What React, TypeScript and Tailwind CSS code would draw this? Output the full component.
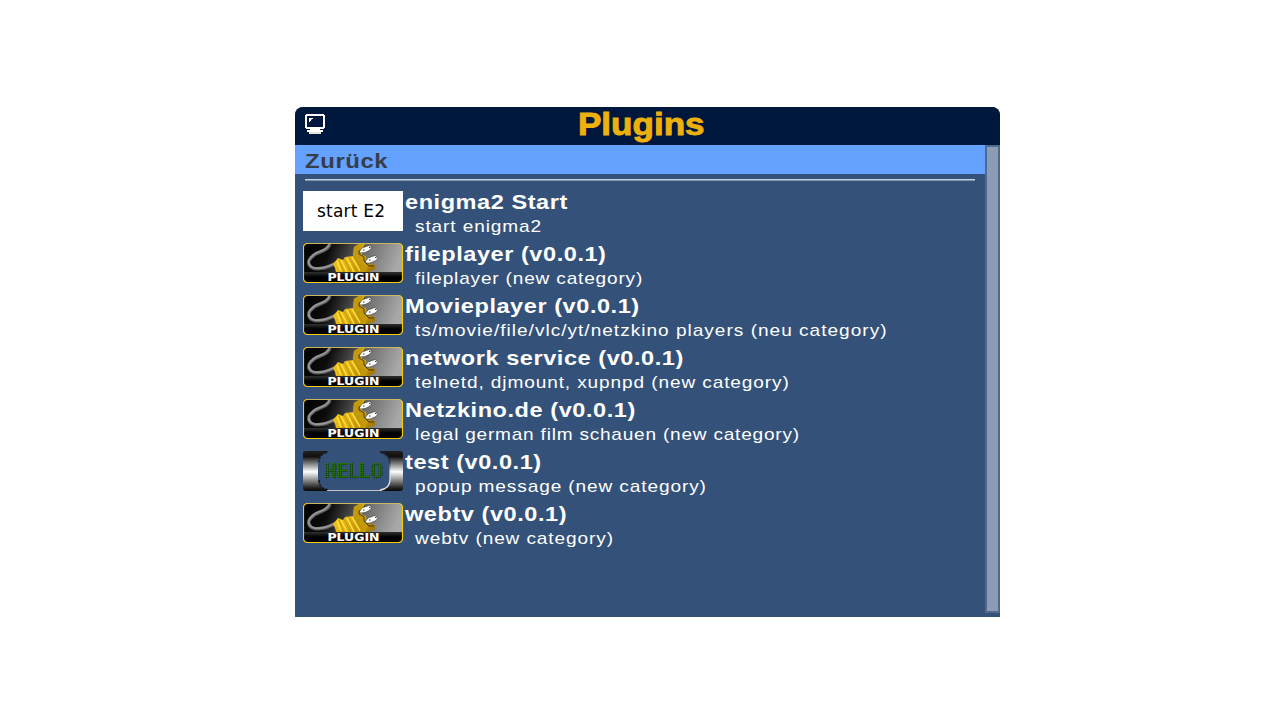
type Plugin = { title: string; text: string; icon: 'start' | 'plug' | 'hello'; textClass: string };

const plugins: Plugin[] = [
  { title: 'enigma2 Start', text: 'start enigma2', icon: 'start', textClass: 'tracking-[0.8px]' },
  { title: 'fileplayer (v0.0.1)', text: 'fileplayer (new category)', icon: 'plug', textClass: 'tracking-[0.74px]' },
  { title: 'Movieplayer (v0.0.1)', text: 'ts/movie/file/vlc/yt/netzkino players (neu category)', icon: 'plug', textClass: 'tracking-[0.9px]' },
  { title: 'network service (v0.0.1)', text: 'telnetd, djmount, xupnpd (new category)', icon: 'plug', textClass: 'tracking-[0.8px]' },
  { title: 'Netzkino.de (v0.0.1)', text: 'legal german film schauen (new category)', icon: 'plug', textClass: 'tracking-[0.7px]' },
  { title: 'test (v0.0.1)', text: 'popup message (new category)', icon: 'hello', textClass: 'tracking-[0.8px]' },
  { title: 'webtv (v0.0.1)', text: 'webtv (new category)', icon: 'plug', textClass: 'tracking-[0.8px]' },
];

function StartBadge() {
  return (
    <div className="flex h-10 w-[100px] shrink-0 items-center bg-white pl-[14px] font-['DejaVu_Sans'] text-[17px] leading-10 tracking-[0.2px] text-black">
      <span className="whitespace-nowrap">start E2</span>
    </div>
  );
}

function PlugBadge() {
  return (
    <svg width="100" height="40" viewBox="0 0 100 40" className="block shrink-0">
      <defs>
        <linearGradient id="plugBg" x1="0" y1="0" x2="1" y2="0.15">
          <stop offset="0" stopColor="#000" />
          <stop offset="0.28" stopColor="#0c0c0c" />
          <stop offset="0.62" stopColor="#686868" />
          <stop offset="1" stopColor="#a8a8a8" />
        </linearGradient>
        <linearGradient id="plugBand" x1="0" y1="0" x2="0" y2="1">
          <stop offset="0" stopColor="#303030" />
          <stop offset="0.5" stopColor="#000" />
        </linearGradient>
        <linearGradient id="plugBody" x1="0" y1="0.3" x2="1" y2="0.7">
          <stop offset="0" stopColor="#f2c81c" />
          <stop offset="0.5" stopColor="#e0b010" />
          <stop offset="1" stopColor="#a87c00" />
        </linearGradient>
      </defs>
      <rect x="0.5" y="0.5" width="99" height="39" rx="4" fill="url(#plugBg)" />
      <path d="M27 1C24 9 16 8 11 12S4 19 7 23S16 26 21 25S29 22 34 20" fill="none" stroke="#5c5c5c" strokeWidth="3.600" />
      <path d="M26.500 1C23.500 8.500 16 7.500 11 11.500S4 18.500 7 22.500S16 25.500 21 24.500S29 21.500 34 19.500" fill="none" stroke="#989898" strokeWidth="1.800" />
      <path d="M30 21L35 15L40 17L42 14L50 13L51 4L56 1L62 1L60 6L59 12L63 13L64 18L68 21L72 22L72 26L66 29H33L32 25Z" fill="url(#plugBody)" />
      <path d="M50 13L51 4L56 1H60L58 7L56 8L56 12L61 14L61 19L65 23L62 29H59Z" fill="#c29a0c" />
      <path d="M36 17L41 29M41 16L48 29M46 15L54 28M51 14L60 27" stroke="#b38a06" strokeWidth="0.700" />
      <path d="M34 18L38 28M38 17L44 29M44 15L51 29M49 14L57 28" stroke="#ffe043" strokeWidth="1.500" />
      <path d="M62 2L60 7L56 8L56 11L61 14L61 18L66 23L71 23" fill="none" stroke="#3e3000" strokeWidth="0.900" />
      <path d="M56.500 8.500L59 5L66 2.500L69 4L67 7L62 9.500L57 10ZM62.500 18.500L65 15L72 12.500L75 14.500L73 17.500L67 20L63 20Z" fill="#fff" stroke="#242424" strokeWidth="0.500" />
      <path d="M60 7H61.500M66 4.500H67.500M66 17H67.500M72 14.500H73.500" stroke="#333" />
      <path d="M1 29H99V36Q99 39 95 39H5Q1 39 1 36Z" fill="url(#plugBand)" />
      <rect x="0.5" y="0.5" width="99" height="39" rx="4" fill="none" stroke="#f9cc00" strokeWidth="1.200" />
      <path d="M4 0.5H96" stroke="#c8b75c" />
      <text x="24.500" y="38" textLength="52" lengthAdjust="spacingAndGlyphs" fill="#fff" stroke="#fff" strokeWidth="0.100" fontFamily="DejaVu Sans" fontWeight="700" fontSize="10.500">PLUGIN</text>
    </svg>
  );
}

const helloRows = [
  '11..11.11111.11....11.....1111.',
  '11..11.11....11....11....11..11',
  '11..11.11....11....11....11..11',
  '111111.11111.11....11....11..11',
  '11..11.11....11....11....11..11',
  '11..11.11....11....11....11..11',
  '11..11.11111.11111.11111..1111.',
];

function HelloBadge() {
  return (
    <svg width="100" height="40" viewBox="0 0 100 40" className="block shrink-0">
      <defs>
        <linearGradient id="steel" x1="0" y1="0" x2="0" y2="1">
          <stop offset="0" stopColor="#202020" />
          <stop offset="0.14" stopColor="#111" />
          <stop offset="0.52" stopColor="#fff" />
          <stop offset="0.92" stopColor="#222" />
          <stop offset="1" stopColor="#080808" />
        </linearGradient>
        <linearGradient id="rim" x1="0" y1="0" x2="0" y2="1">
          <stop offset="0" stopColor="#101820" />
          <stop offset="0.25" stopColor="#202832" />
          <stop offset="0.5" stopColor="#ddd" />
        </linearGradient>
      </defs>
      <path d="M3 0H26Q15 3 15 12V28Q15 37 26 40H3Q0 40 0 37V3Q0 0 3 0ZM76 0H97Q100 0 100 3V37Q100 40 97 40H78Q87 37 87 28V12Q87 3 76 0Z" fill="url(#steel)" />
      <path d="M24 1Q16 4 16 11" fill="none" stroke="#101820" strokeWidth="1.500" strokeDasharray="3 1" />
      <path d="M16 29Q16 38 26 39" fill="none" stroke="#101820" strokeWidth="1.500" strokeDasharray="3 1" />
      <path d="M77 1Q87 4 87 12V28Q87 38 77 39" fill="none" stroke="url(#rim)" strokeWidth="1.300" />
      <path d="M24 39.500H79" stroke="#c4c4c4" />
      <g>
        {helloRows.flatMap((row, y) =>
          row.split('').map((cell, x) =>
            cell === '1' ? (
              <g key={`${y}-${x}`}>
                <rect x={22 + x * 1.85} y={12 + y * 2.15} width="1.900" height="2.200" fill="#103408" />
                <rect x={22 + x * 1.85} y={12 + y * 2.15} width="1.350" height="1.600" fill="#288400" />
              </g>
            ) : null,
          ),
        )}
      </g>
    </svg>
  );
}

const badges = { start: StartBadge, plug: PlugBadge, hello: HelloBadge };

function Row({ plugin }: { plugin: Plugin }) {
  const Badge = badges[plugin.icon];
  return (
    <li className="flex h-[52px] items-start">
      <Badge />
      <div className="min-w-0 pl-[2px] text-white">
        <div className="h-[23px] w-max origin-left scale-x-[1.12] text-[21px] leading-[22px] font-bold tracking-[0.5px] whitespace-nowrap">{plugin.title}</div>
        <div className={`ml-[10px] h-[26px] w-max origin-left scale-x-[1.12] text-[17px] leading-[26px] whitespace-nowrap ${plugin.textClass}`}>{plugin.text}</div>
      </div>
    </li>
  );
}

export default function App() {
  return (
    <main className="h-[720px] w-full overflow-hidden bg-white pt-[107px] pl-[295px] font-['Liberation_Sans',sans-serif]">
      <section className="h-[510px] w-[705px] overflow-hidden rounded-t-[8px] bg-[#345279]">
        <header className="flex h-[38px] bg-[#00173d]">
          <svg width="20" height="20" viewBox="0 0 20 20" className="mt-[7px] ml-[10px] shrink-0" shapeRendering="crispEdges">
            <path fillRule="evenodd" d="M1 0H19V1H20V14H19V15H1V14H0V1H1ZM2 2V13H18V2Z" fill="#fff" />
            <path d="M4 4H8V5H6V7H5V8H4ZM5 15H15V16H18V18H15V19H5V18H2V16H5Z" fill="#fff" />
            <path d="M4 18H16V20H4Z" fill="#e4e4dc" />
            <path d="M6 5H7V6H6Z" fill="#8f9aaa" />
          </svg>
          <h1 className="ml-[253px] h-[38px] w-max origin-left scale-x-[1.13] text-[31px] leading-[35px] font-bold text-[#eeb10c] [-webkit-text-stroke:0.9px_#eeb10c]">Plugins</h1>
        </header>
        <div className="flex h-[472px]">
          <div className="w-[690px]">
            <div className="h-[29px] bg-[#65a1ff] pl-[10px]">
              <div className="w-max origin-left scale-x-[1.14] text-[21px] leading-[31px] font-bold tracking-[0.5px] text-[#363e4b]">Zurück</div>
            </div>
            <div className="mx-[10px] mt-[5px] h-[2px] border-t border-[#c4d0df] bg-[#8295af]" />
            <ul className="pt-[10px] pl-[8px]">
              {plugins.map((plugin) => (
                <Row key={plugin.title} plugin={plugin} />
              ))}
            </ul>
          </div>
          <div className="h-[468px] w-[15px] border-2 border-[#506a8b] bg-[#8b9cb4]" />
        </div>
      </section>
    </main>
  );
}
